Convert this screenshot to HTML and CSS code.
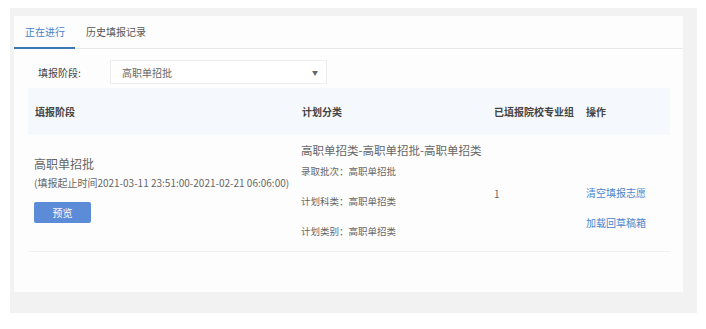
FILE: index.html
```html
<!DOCTYPE html>
<html lang="zh-CN">
<head>
  <meta charset="UTF-8" />
  <title>志愿填报</title>
  <link rel="stylesheet" href="styles.css">
</head>
<body>

<div class="page">
  <div class="card">
    <!-- 标签页 -->
    <div class="tabs">
      <div class="tab active">正在进行</div>
      <div class="tab">历史填报记录</div>
    </div>

    <!-- 筛选 -->
    <div class="filter">
      <span class="filter-label">填报阶段:</span>
      <div class="select">
        <span>高职单招批</span>
        <span class="arrow">▼</span>
      </div>
    </div>

    <!-- 列表 -->
    <div class="table">
      <div class="row head">
        <div class="cell">填报阶段</div>
        <div class="cell">计划分类</div>
        <div class="cell">已填报院校专业组</div>
        <div class="cell">操作</div>
      </div>
      <div class="row body">
        <div class="cell stage">
          <div class="stage-name">高职单招批</div>
          <div class="stage-time">(填报起止时间2021-03-11 23:51:00-2021-02-21 06:06:00)</div>
          <button class="btn">预览</button>
        </div>
        <div class="cell plan">
          <div class="plan-title">高职单招类-高职单招批-高职单招类</div>
          <div class="plan-item">录取批次：高职单招批</div>
          <div class="plan-item">计划科类：高职单招类</div>
          <div class="plan-item">计划类别：高职单招类</div>
        </div>
        <div class="cell count">1</div>
        <div class="cell ops">
          <a href="#">清空填报志愿</a>
          <a href="#">加载回草稿箱</a>
        </div>
      </div>
    </div>
  </div>
</div>

</body>
</html>
```

FILE: styles.css
```css
body {
  margin: 0;
  background: #fff;
  font-family: "Noto Sans CJK SC", "Noto Sans", sans-serif;
  color: #555;
}

.page {
  margin: 8px 9px 0 10px;
  height: 305px;
  box-sizing: border-box;
  background: #f2f2f2;
  padding: 8px 14px 21px 4px;
}

.card {
  background: #fdfdfd;
  height: 100%;
}

.tabs {
  display: flex;
  height: 33px;
  border-bottom: 1px solid #e6e8ec;
  box-sizing: border-box;
}

.tab {
  font-size: 10px;
  line-height: 32px;
  padding: 0 11px;
  color: #555;
  white-space: nowrap;
}

.tab.active {
  color: #3f82c6;
  padding: 0 10px 0 11px;
  border-bottom: 2px solid #3c77b4;
  margin-bottom: -1px;
  line-height: 31px;
}

.filter {
  display: flex;
  align-items: center;
  margin: 11px 0 0 24px;
}

.filter-label {
  font-size: 10px;
  width: 72px;
  color: #444;
}

.select {
  width: 217px;
  height: 24px;
  box-sizing: border-box;
  border: 1px solid #eceef1;
  background: #fff;
  display: flex;
  align-items: center;
  justify-content: space-between;
  padding: 0 8px 0 11px;
  font-size: 10px;
  color: #666;
}

.arrow {
  font-size: 6px;
  color: #666;
}

.table {
  margin: 4px 13px 0 14px;
}

.row {
  display: grid;
  grid-template-columns: 267px 192px 92px 1fr;
}

.cell {
  padding-left: 7px;
}

.row.head {
  background: #f5f8fc;
  height: 47px;
  align-items: center;
  font-size: 10px;
  font-weight: bold;
  color: #444;
}

.row.body {
  height: 117px;
  border-bottom: 1px solid #eef0f3;
  box-sizing: border-box;
}

.stage {
  padding-top: 20px;
  padding-left: 6px;
}

.stage-name {
  font-size: 12px;
  line-height: 18px;
  color: #666;
}

.stage-time {
  font-size: 10px;
  line-height: 14px;
  margin-top: 3px;
  color: #666;
}

.btn {
  display: block;
  margin-top: 12px;
  width: 57px;
  height: 21px;
  border: none;
  border-radius: 2px;
  background: #5c8bd7;
  color: #fff;
  font-family: inherit;
  font-size: 10px;
  padding: 0;
}

.plan {
  padding-top: 7px;
  padding-left: 6px;
}

.plan-title {
  font-size: 11.5px;
  line-height: 16px;
  color: #666;
}

.plan-item {
  font-size: 9.5px;
  line-height: 14px;
  margin-top: 16px;
  color: #666;
}

.plan-title + .plan-item {
  margin-top: 6px;
}

.count {
  padding-top: 51px;
  font-size: 10px;
  color: #666;
}

.ops {
  display: flex;
  flex-direction: column;
  gap: 16px;
  padding-top: 51px;
}

.ops a {
  font-size: 10px;
  line-height: 14px;
  color: #4a85cc;
  text-decoration: none;
}
```
